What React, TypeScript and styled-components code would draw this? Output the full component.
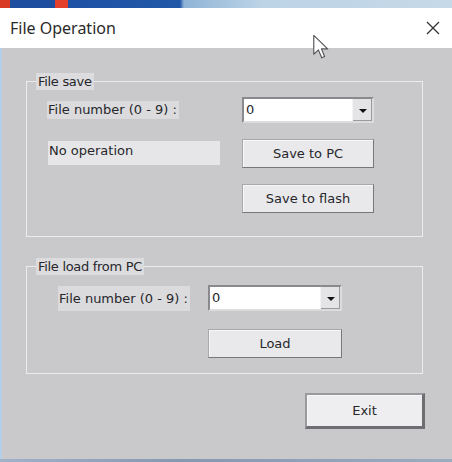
import React from "react";
import styled, { createGlobalStyle } from "styled-components";

const GlobalStyle = createGlobalStyle`
  html, body {
    margin: 0;
    padding: 0;
    background: #c9c9cc;
  }
`;

const Window = styled.div`
  width: 452px;
  height: 462px;
  position: relative;
  overflow: hidden;
  display: flex;
  flex-direction: column;
  background-color: #c9c9cc;
  font-family: "DejaVu Sans", Verdana, sans-serif;
  font-size: 13px;
  color: #27272b;
`;

// a piece of the desktop wallpaper shows above the dialog
const Wallpaper = styled.div`
  height: 8px;
  flex-shrink: 0;
  background: linear-gradient(
    to right,
    #d83a26 0px,
    #d83a26 10px,
    #1c4d9e 10px,
    #1c4d9e 55px,
    #e2402a 55px,
    #e2402a 68px,
    #1d52a4 68px,
    #2258a8 180px,
    #8fb4d6 184px,
    #bcd3e6 260px,
    #c6d9e8 452px
  );
`;

const TitleBar = styled.div`
  height: 40px;
  flex-shrink: 0;
  display: flex;
  align-items: center;
  justify-content: space-between;
  padding: 0 12px 0 10px;
  background-color: #ffffff;
`;

const Title = styled.span`
  font-family: "Noto Sans", "Open Sans", sans-serif;
  font-size: 16px;
  color: #2a2a2a;
`;

const CloseIcon = styled.svg`
  width: 14px;
  height: 14px;
  display: block;
`;

const Body = styled.div`
  flex: 1;
  display: flex;
  flex-direction: column;
  padding: 25px 29px 0 26px;
  box-shadow: inset 2px 0 0 #b6cfe8;
`;

const Group = styled.fieldset`
  margin: 0;
  padding: 0;
  min-width: 0;
  border: 1px solid #ececee;
  border-radius: 0;

  & + & {
    margin-top: 21px;
  }
`;

const Legend = styled.legend`
  margin-left: 9px;
  padding: 0 2px;
  line-height: 17px;
  letter-spacing: -0.3px;
  background-color: #dcdcde;
`;

const SaveGrid = styled.div`
  display: grid;
  grid-template-columns: 172px 132px;
  grid-template-rows: 26px 29px 29px;
  column-gap: 22px;
  row-gap: 16px;
  padding: 7px 0 23px 21px;
`;

const LoadGrid = styled.div`
  display: grid;
  grid-template-columns: 137px 134px;
  grid-template-rows: 26px 29px;
  column-gap: 12px;
  row-gap: 18px;
  padding: 10px 0 15px 32px;
`;

const Label = styled.span<{ $tall?: boolean }>`
  justify-self: start;
  align-self: center;
  height: ${(p) => (p.$tall ? 25 : 18)}px;
  line-height: ${(p) => (p.$tall ? 25 : 18)}px;
  padding: 0 2px 0 1px;
  margin-left: -1px;
  background-color: #dbdbdd;
  white-space: nowrap;
`;

const Status = styled.div`
  align-self: start;
  margin-top: 2px;
  height: 24px;
  line-height: 20px;
  padding-left: 1px;
  background-color: #e6e6e8;
`;

const Combo = styled.div`
  display: flex;
  align-items: stretch;
  box-sizing: border-box;
  background-color: #ffffff;
  border: 2px solid;
  border-color: #8a8a8e #dcdcde #dcdcde #8a8a8e;
`;

const ComboValue = styled.span`
  flex: 1;
  padding-left: 2px;
  line-height: 22px;
`;

const DropButton = styled.span`
  width: 19px;
  display: flex;
  align-items: center;
  justify-content: center;
  background-color: #e4e4e6;
  border-left: 1px solid #f4f4f6;
  box-shadow: inset -1px -1px 0 #9a9a9e;

  &::after {
    content: "";
    border-left: 4px solid transparent;
    border-right: 4px solid transparent;
    border-top: 4px solid #111111;
    margin-top: 1px;
  }
`;

const Button = styled.button<{ $wide?: boolean }>`
  box-sizing: border-box;
  margin: 0;
  padding: 0;
  font-family: inherit;
  font-size: 13px;
  color: #27272b;
  background-color: ${(p) => (p.$wide ? "#eeeef0" : "#e9e9eb")};
  border: 1px solid;
  border-color: #a8a8ac #77777b #77777b #a8a8ac;
  box-shadow: inset 1px 1px 0 #f7f7f8;
  cursor: pointer;
`;

const SaveButton = styled(Button)`
  grid-column: 2;
`;

const Footer = styled.div`
  display: flex;
  justify-content: flex-end;
  padding-top: 19px;
  margin-right: -2px;
`;

const ExitButton = styled(Button)`
  width: 120px;
  height: 36px;
  border-width: 2px 3px 3px 2px;
  border-color: #9a9a9e #6e6e72 #6e6e72 #9a9a9e;
`;

const BottomStrip = styled.div`
  height: 3px;
  flex-shrink: 0;
  background: linear-gradient(to right, #9fb2c8, #8498b0 40%, #9aacc0);
`;

const Cursor = styled.svg`
  position: absolute;
  left: 312px;
  top: 34px;
  width: 18px;
  height: 26px;
  pointer-events: none;
`;

const ComboBox = ({ value }: { value: string }) => (
  <Combo>
    <ComboValue>{value}</ComboValue>
    <DropButton />
  </Combo>
);

const App = () => {
  return (
    <>
      <GlobalStyle />
      <Window>
        <Wallpaper />
        <TitleBar>
          <Title>File Operation</Title>
          <CloseIcon viewBox="0 0 14 14">
            <path d="M1 1 L13 13 M13 1 L1 13" stroke="#333" strokeWidth="1.3" fill="none" />
          </CloseIcon>
        </TitleBar>
        <Body>
          <Group>
            <Legend>File save</Legend>
            <SaveGrid>
              <Label>File number (0 - 9) :</Label>
              <ComboBox value="0" />
              <Status>No operation</Status>
              <SaveButton>Save to PC</SaveButton>
              <SaveButton>Save to flash</SaveButton>
            </SaveGrid>
          </Group>
          <Group>
            <Legend>File load from PC</Legend>
            <LoadGrid>
              <Label $tall>File number (0 - 9) :</Label>
              <ComboBox value="0" />
              <SaveButton>Load</SaveButton>
            </LoadGrid>
          </Group>
          <Footer>
            <ExitButton $wide>Exit</ExitButton>
          </Footer>
        </Body>
        <BottomStrip />
        <Cursor viewBox="0 0 12 18">
          <path
            d="M1 1 L1 14 L4.2 11 L6.5 16.5 L8.5 15.6 L6.3 10.3 L10.6 10.3 Z"
            fill="#ffffff"
            stroke="#55555a"
            strokeWidth="0.8"
            strokeLinejoin="round"
          />
        </Cursor>
      </Window>
    </>
  );
};

export default App;
